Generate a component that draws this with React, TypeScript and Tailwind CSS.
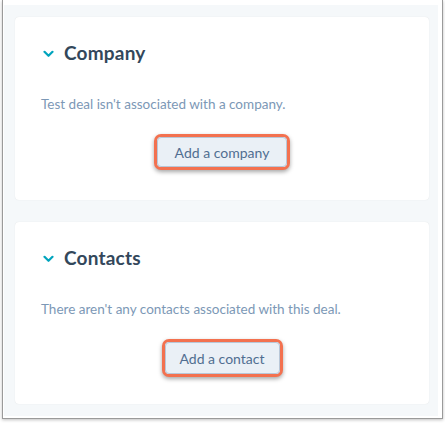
import React from 'react';

const Chevron = () => (
  <svg width="11" height="8" viewBox="0 0 11 8" className="shrink-0">
    <path d="M1.5 1.8 L5.5 5.8 L9.5 1.8" fill="none" stroke="#00a4bd" strokeWidth="2.2" strokeLinecap="round" strokeLinejoin="round" />
  </svg>
);

const Section = ({
  title,
  text,
  action,
  height,
  btnWidth,
}: {
  title: string;
  text: string;
  action: string;
  height: string;
  btnWidth: string;
}) => (
  <div className={`ml-[11px] w-[414px] ${height} bg-white rounded-[4px] shadow-[0_0_1px_rgba(0,0,0,0.12)] flex flex-col`}>
    <div className="flex items-center pl-[28px] pt-[25px] h-[48px] gap-[10px]">
      <Chevron />
      <h2 className="text-[19px] font-bold text-[#33475b] tracking-[0.2px]">{title}</h2>
    </div>
    <p className="pl-[26px] mt-[29px] text-[13.5px] text-[#7c98b6] leading-[20px]">{text}</p>
    <div className="flex justify-center mt-[20px]">
      <div className={`${btnWidth} rounded-[7px] border-[3px] border-[#f3714f] shadow-[0_2px_4px_rgba(0,0,0,0.35)] bg-[#dfe6ee]`}>
        <button className="w-full h-full rounded-[4px] border border-[#b8c7d8] bg-[#eaf0f6] text-[14px] text-[#506e91] flex items-center justify-center">
          {action}
        </button>
      </div>
    </div>
  </div>
);

export default function App() {
  return (
    <div className="w-[445px] h-[423px] bg-white overflow-hidden" style={{ fontFamily: 'Lato, "Noto Sans", sans-serif' }}>
      <div className="ml-[2px] w-[441px] h-[419px] border-l border-r border-b border-[#9a9a9a] shadow-[0_1px_3px_rgba(0,0,0,0.25)] pt-[5px] pl-px pr-[4px] pb-[2px]">
        <div className="bg-[#f5f8fa] h-full pt-[12px] flex flex-col gap-[22px]">
          <Section
            title="Company"
            text="Test deal isn't associated with a company."
            action="Add a company"
            height="h-[183px]"
            btnWidth="w-[136px] h-[36px]"
          />
          <Section
            title="Contacts"
            text="There aren't any contacts associated with this deal."
            action="Add a contact"
            height="h-[182px]"
            btnWidth="w-[121px] h-[38px]"
          />
        </div>
      </div>
    </div>
  );
}
